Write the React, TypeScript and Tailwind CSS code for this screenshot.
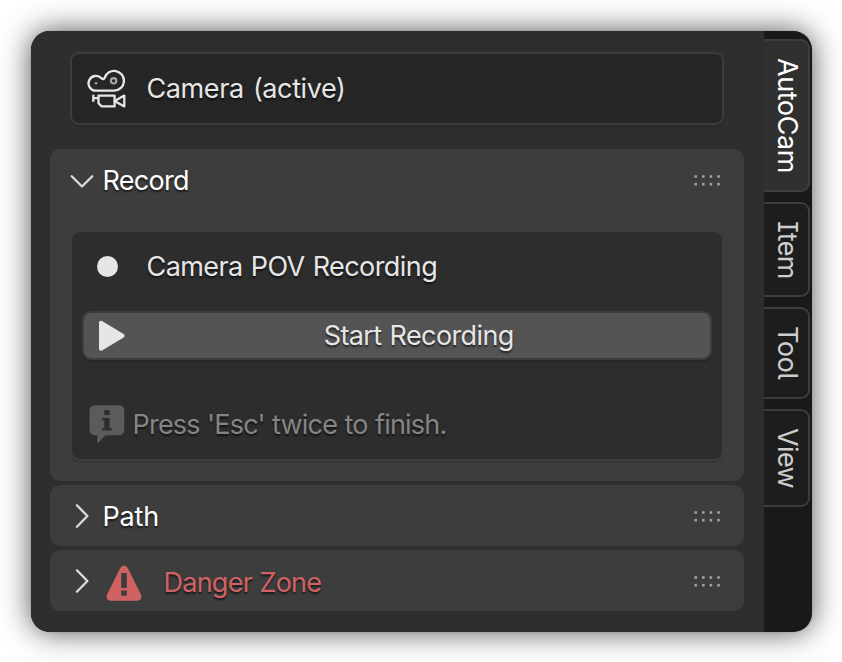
import type { ReactNode } from "react";

const label = "whitespace-nowrap text-[27px] leading-[34px]";
const shade = "[text-shadow:0_2px_2px_rgba(0,0,0,0.6)]";

function Grip() {
  return (
    <svg width="28" height="12" viewBox="0 0 28 12" fill="#a0a0a0" className="shrink-0">
      {[0.4, 8, 15.6, 23.2].map((x) => (
        <g key={x}>
          <rect x={x} y="0.2" width="2.6" height="2.6" />
          <rect x={x} y="7.9" width="2.6" height="2.6" />
        </g>
      ))}
    </svg>
  );
}

function Chevron({ open }: { open?: boolean }) {
  return (
    <svg width="24" height="26" viewBox="0 0 24 26" fill="none" stroke="#dcdcdc" strokeWidth="2.3" strokeLinecap="round" strokeLinejoin="round" className="shrink-0">
      <path d={open ? "M1.7 9.3L12 19.5L22.3 9.3" : "M6.9 2.3L17.4 13L6.9 23.7"} />
    </svg>
  );
}

function CameraIcon() {
  return (
    <svg width="42" height="42" viewBox="0.4 0.5 42 42" fill="none" stroke="#e6e6e6" strokeWidth="2.3" strokeLinejoin="round" className="shrink-0">
      <path d="M11.3 23.2H29.8A9.9 9.9 0 1 0 20 10.4Q19 12.4 16.8 10.8A7.4 7.4 0 1 0 11.3 23.2Z" />
      <circle cx="29" cy="13.3" r="2.7" stroke="#a6a6a6" strokeWidth="2.1" />
      <circle cx="11.5" cy="15.8" r="1.3" fill="#a6a6a6" stroke="none" />
      <path d="M13.9 28.2H30V38.9H17L13.9 35.8Z" />
      <path d="M8.7 27.2V34.2M8.7 30.7H13.7M30 33.5L39.7 28.1V38.9Z" />
    </svg>
  );
}

function InfoIcon() {
  return (
    <svg width="36" height="40" viewBox="0 0 36 40" className="shrink-0">
      <path fill="#5b5b5b" d="M6.5 1.2H29.5Q35.3 1.2 35.3 7V25.5Q35.3 31.3 29.5 31.3H16.3L9.7 38.5Q8.2 39.3 8.2 37.5V31.3H6.5Q.5 31.3 .5 25.5V7Q.5 1.2 6.5 1.2Z" />
      <path fill="#2d2d2d" d="M15.3 6.2H20.6V10.9H15.3ZM13.1 14H20.6V24.2H22.9V26.4H13.1V24.2H15.3V16.2H13.1Z" />
    </svg>
  );
}

function WarningIcon() {
  return (
    <svg width="36" height="38" viewBox="0 0 36 38" className="shrink-0">
      <path fill="#d06263" d="M14 4.5Q18 -1.5 22 4.5L34.6 30Q37 36.5 31 36.7H5Q-1 36.5 1.4 30Z" />
      <path fill="#3d3d3d" d="M15.2 9H20.8V24H15.2ZM15.2 26.4H20.8V31.8H15.2Z" />
    </svg>
  );
}

function Header({ open, children }: { open?: boolean; children: ReactNode }) {
  return (
    <div className="flex h-[61px] items-center pl-[20px] pr-[22px]">
      <Chevron open={open} />
      {children}
      <div className="ml-auto pt-[2px]"><Grip /></div>
    </div>
  );
}

function Tab({ active, className, children }: { active?: boolean; className: string; children: ReactNode }) {
  return (
    <div className={`w-[46px] rounded-r-[9px] border-2 border-l-0 border-[#3d3d3d] pl-[6px] ${active ? "bg-[#303030] text-white" : "bg-[#1d1d1d] text-[#cccccc]"} ${className}`}>
      <div className={`${label} [writing-mode:vertical-rl]`}>{children}</div>
    </div>
  );
}

export default function App() {
  return (
    <div className="h-[662px] w-[842px] overflow-hidden bg-white pl-[30.5px] pt-[30.5px] font-['Inter',sans-serif] text-[#e6e6e6] [font-feature-settings:'cv05','cv08']">
      <div className="flex h-[601.5px] w-[781.5px] overflow-hidden rounded-[19px] bg-[#191919] shadow-[0_0_30px_rgba(0,0,0,0.68),0_0_1px_rgba(0,0,0,0.4)]">
        <div className="w-[733.5px] shrink-0 bg-[#2e2e2e] pl-[19.5px] pt-[21.5px]">
          <div className="ml-[20px] flex h-[73px] w-[654px] items-center rounded-[9px] border-2 border-[#3d3d3d] bg-[#262626] pl-[13px] shadow-[0_2px_0_#292929]">
            <CameraIcon />
            <span className={`ml-[19.5px] tracking-[-0.4px] [word-spacing:2px] ${label} ${shade}`}>Camera (active)</span>
          </div>
          <div className="mt-[24px] flex w-[694px] flex-col gap-[4px]">
            <section className="h-[332px] rounded-[10px] bg-[#3d3d3d]">
              <Header open>
                <span className={`ml-[8.5px] mt-[3px] tracking-[-0.7px] text-white ${label} ${shade}`}>Record</span>
              </Header>
              <div className="ml-[20px] mt-[20px] h-[231px] w-[654px] rounded-[10px] border-2 border-[#3d3d3d] bg-[#2d2d2d] shadow-[0_2px_0_#363636]">
                <div className="flex h-[69px] items-center pl-[25px]">
                  <span className="h-[20.5px] w-[20.5px] rounded-full bg-[#e6e6e6]" />
                  <span className={`ml-[29px] tracking-[-0.57px] [word-spacing:1px] ${label} ${shade}`}>Camera POV Recording</span>
                </div>
                <button className="ml-[10px] mt-[10px] flex h-[49px] w-[630px] items-center rounded-[9px] border-2 border-[#3d3d3d] bg-[#545454] shadow-[0_2px_0_#262626]">
                  <svg width="42" height="36" viewBox="0 0 42 36" className="shrink-0">
                    <path d="M17 4.8V30.8L38.6 17.8Z" fill="#e6e6e6" stroke="#e6e6e6" strokeWidth="4" strokeLinejoin="round" />
                  </svg>
                  <span className={`ml-[1.5px] grow text-center tracking-[-0.6px] [word-spacing:1px] ${label} ${shade}`}>Start Recording</span>
                </button>
                <div className="mt-[44px] flex items-center pl-[17px]">
                  <InfoIcon />
                  <span className={`ml-[7.5px] mt-[2px] tracking-[-0.79px] [word-spacing:0.5px] text-[#858585] ${label} ${shade}`}>Press 'Esc' twice to finish.</span>
                </div>
              </div>
            </section>
            <section className="rounded-[10px] bg-[#3d3d3d]">
              <Header><span className={`ml-[8.5px] mt-[3px] tracking-[-0.2px] text-white ${label} ${shade}`}>Path</span></Header>
            </section>
            <section className="rounded-[10px] bg-[#3d3d3d]">
              <Header>
                <div className="ml-[12px] mt-[4px]"><WarningIcon /></div>
                <span className={`ml-[21.5px] mt-[4px] tracking-[-0.75px] [word-spacing:0.5px] text-[#d06263] ${label} ${shade}`}>Danger Zone</span>
              </Header>
            </section>
          </div>
        </div>
        <div className="flex w-[48px] flex-col pt-[8.5px]">
          <Tab active className="h-[153px] pt-[17px] tracking-[-0.4px]">AutoCam</Tab>
          <Tab className="mt-[10px] h-[95px] pt-[16.5px] tracking-[-0.6px]">Item</Tab>
          <Tab className="mt-[10px] h-[92px] pt-[17px] tracking-[-0.4px]">Tool</Tab>
          <Tab className="mt-[10px] h-[98px] pt-[17px] tracking-[-0.6px]">View</Tab>
        </div>
      </div>
    </div>
  );
}
